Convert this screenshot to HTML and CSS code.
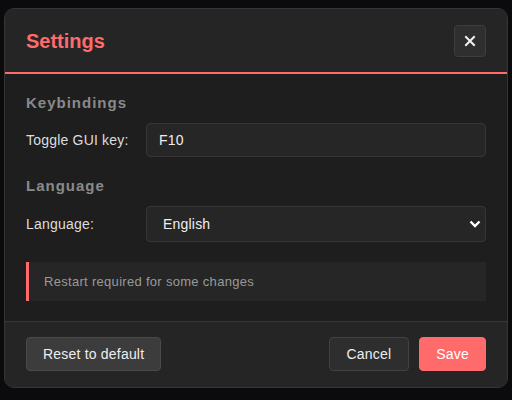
FILE: index.html
```html
<!DOCTYPE html>
<html>
<head>
<meta charset="utf-8">
<link rel="stylesheet" href="styles.css">
</head>
<body>
<div class="modal">
  <div class="modal-header">
    <h2 class="title">Settings</h2>
    <button class="close-btn" aria-label="Close">
      <svg width="12" height="12" viewBox="0 0 12 12"><path d="M2 2 L10 10 M10 2 L2 10" stroke="#f2f2f2" stroke-width="2" stroke-linecap="square"/></svg>
    </button>
  </div>
  <div class="modal-body">
    <h3 class="section-title">Keybindings</h3>
    <div class="row">
      <label class="label">Toggle GUI key:</label>
      <input class="field" type="text" value="F10">
    </div>
    <h3 class="section-title">Language</h3>
    <div class="row">
      <label class="label">Language:</label>
      <div class="select-wrap">
        <select class="field select">
          <option>English</option>
        </select>
        <svg class="chevron" width="12" height="8" viewBox="0 0 12 8"><path d="M1.5 1.5 L6 6 L10.5 1.5" fill="none" stroke="#ffffff" stroke-width="2.4"/></svg>
      </div>
    </div>
    <div class="notice">Restart required for some changes</div>
  </div>
  <div class="modal-footer">
    <button class="btn btn-secondary">Reset to default</button>
    <div class="footer-right">
      <button class="btn btn-cancel">Cancel</button>
      <button class="btn btn-primary">Save</button>
    </div>
  </div>
</div>
</body>
</html>
```

FILE: styles.css
```css
* { box-sizing: border-box; }
html, body { margin: 0; padding: 0; }
body {
  width: 512px;
  height: 400px;
  background: #0b0b0d;
  font-family: "Liberation Sans", Arial, sans-serif;
  overflow: hidden;
  padding: 8px 4px 0 4px;
}
.modal {
  width: 504px;
  height: 380px;
  background: #1e1e1e;
  border: 1px solid #363636;
  border-radius: 10px;
  overflow: hidden;
  display: flex;
  flex-direction: column;
}
.modal-header {
  background: #252525;
  border-bottom: 2px solid #ff6b6b;
  padding: 16px 21px 15px 21px;
  display: flex;
  align-items: center;
  justify-content: space-between;
}
.title {
  margin: 0;
  color: #ff6b6b;
  font-size: 20px;
  font-weight: bold;
}
.close-btn {
  width: 32px;
  height: 32px;
  background: #2f2f2f;
  border: 1px solid #3e3e3e;
  border-radius: 4px;
  display: flex;
  align-items: center;
  justify-content: center;
  padding: 0;
}
.modal-body {
  flex: 1;
  padding: 20px 21px 20px 21px;
  display: flex;
  flex-direction: column;
}
.section-title {
  margin: 0 0 11px 0;
  color: #8a8a8a;
  font-size: 15px;
  line-height: 18px;
  font-weight: bold;
  letter-spacing: 1px;
}
.row {
  display: grid;
  grid-template-columns: 120px 1fr;
  align-items: center;
  margin-bottom: 20px;
}
.label {
  color: #dddddd;
  font-size: 14px;
  letter-spacing: 0.2px;
}
.field {
  width: 100%;
  height: 34px;
  background: #262626;
  border: 1px solid #363636;
  border-radius: 4px;
  color: #eeeeee;
  font-family: "Liberation Sans", Arial, sans-serif;
  font-size: 14px;
  letter-spacing: 0.2px;
  padding: 0 12px;
  outline: none;
}
.select-wrap {
  position: relative;
}
.select {
  height: 36px;
  appearance: none;
  -webkit-appearance: none;
  padding: 0 16px;
}
.chevron {
  position: absolute;
  right: 5px;
  top: 14px;
}
.notice {
  background: #262626;
  border-left: 3px solid #ff6b6b;
  color: #9a9a9a;
  font-size: 13px;
  line-height: 15px;
  letter-spacing: 0.3px;
  padding: 12px 15px;
}
.modal-footer {
  background: #252525;
  border-top: 1px solid #363636;
  padding: 15px 21px 16px 21px;
  display: flex;
  justify-content: space-between;
  align-items: center;
}
.footer-right {
  display: flex;
  gap: 10px;
}
.btn {
  height: 34px;
  border-radius: 4px;
  font-family: "Liberation Sans", Arial, sans-serif;
  font-size: 14px;
  letter-spacing: 0.2px;
  padding: 0 16px;
  color: #eeeeee;
}
.btn-secondary {
  background: #3c3c3c;
  border: 1px solid #4a4a4a;
}
.btn-cancel {
  background: #2e2e2e;
  border: 1px solid #424242;
  padding: 0 17px;
}
.btn-primary {
  background: #ff6b6b;
  border: 1px solid #ff6b6b;
  color: #ffffff;
  padding: 0 16px;
}
```
